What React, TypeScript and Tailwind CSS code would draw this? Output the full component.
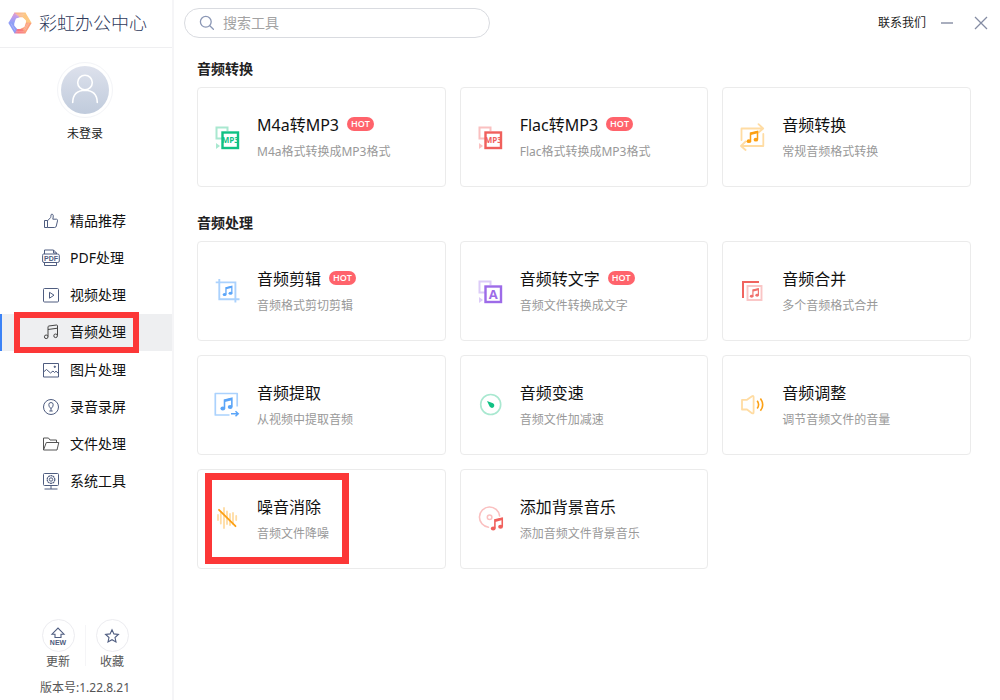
import { useState } from 'react';
import type { ReactNode } from 'react';

type Tool = {
  title: string;
  desc: string;
  icon: ReactNode;
  hot?: boolean;
  marked?: boolean;
};

type MenuItem = {
  id: string;
  label: string;
  icon: ReactNode;
};

// Beamed note, drawn in a 12x13 area and placed with x / y / scale
function Note({ x, y, s = 1, color }: { x: number; y: number; s?: number; color: string }) {
  return (
    <g transform={`translate(${x} ${y}) scale(${s})`} stroke={color} fill="none" strokeWidth="1.5">
      <path d="M4 10.5V2.6L11 0.9V9" />
      <path d="M4 3.4L11 1.7" strokeWidth="2.2" />
      <ellipse cx="2.4" cy="10.7" rx="2.3" ry="1.9" fill={color} stroke="none" />
      <ellipse cx="9.4" cy="9.2" rx="2.3" ry="1.9" fill={color} stroke="none" />
    </g>
  );
}

function ToolSvg({ children }: { children: ReactNode }) {
  return (
    <svg viewBox="0 0 28 28" className="h-7 w-7 shrink-0" fill="none" aria-hidden="true">
      {children}
    </svg>
  );
}

function ConvertIcon({ color, light, text }: { color: string; light: string; text: string }) {
  const letter = text.length === 1;
  return (
    <ToolSvg>
      <path d="M8 15.5H2.5V4.5H13.5V8" stroke={light} strokeWidth="2" />
      <path d="M2 20L6 23L2 26Z" fill={light} />
      <rect x="8.5" y="9.5" width="15.5" height="15.5" stroke={color} strokeWidth="2.4" />
      <text
        x="16.3"
        y={letter ? 22 : 20.2}
        textAnchor="middle"
        fontSize={letter ? 13 : 8}
        fontWeight="700"
        fill={color}
        fontFamily="Open Sans, sans-serif"
      >
        {text}
      </text>
    </ToolSvg>
  );
}

const convertTools: Tool[] = [
  {
    title: 'M4a转MP3',
    desc: 'M4a格式转换成MP3格式',
    hot: true,
    icon: <ConvertIcon color="#10c184" light="#a9e8d0" text="MP3" />,
  },
  {
    title: 'Flac转MP3',
    desc: 'Flac格式转换成MP3格式',
    hot: true,
    icon: <ConvertIcon color="#f0605c" light="#fac0c0" text="MP3" />,
  },
  {
    title: '音频转换',
    desc: '常规音频格式转换',
    icon: (
      <ToolSvg>
        <g stroke="#ffdca3" strokeWidth="1.8" strokeLinejoin="round" strokeLinecap="round">
          <path d="M2.5 17V5.5H24M19.5 1.2L24.2 5.5L19.5 9.5" />
          <path d="M24.3 11V23H2.2M6.6 18.5L2 23L6.6 27" />
        </g>
        <Note x={7.5} y={7.5} color="#fca014" />
      </ToolSvg>
    ),
  },
];

const processTools: Tool[] = [
  {
    title: '音频剪辑',
    desc: '音频格式剪切剪辑',
    hot: true,
    icon: (
      <ToolSvg>
        <path d="M5.3 2V22.2H25.5M1.7 5.4H21.4V25.5" stroke="#abd2fd" strokeWidth="1.9" />
        <Note x={8.6} y={8.5} s={0.84} color="#5ba5f8" />
      </ToolSvg>
    ),
  },
  {
    title: '音频转文字',
    desc: '音频文件转换成文字',
    hot: true,
    icon: <ConvertIcon color="#9d6be8" light="#dccbf8" text="A" />,
  },
  {
    title: '音频合并',
    desc: '多个音频格式合并',
    icon: (
      <ToolSvg>
        <path d="M4 21V5H20" stroke="#f0645f" strokeWidth="2" />
        <rect x="8.5" y="9" width="14" height="14" stroke="#fac5c5" strokeWidth="1.9" />
        <Note x={10.8} y={11} s={0.78} color="#f0706c" />
      </ToolSvg>
    ),
  },
  {
    title: '音频提取',
    desc: '从视频中提取音频',
    icon: (
      <ToolSvg>
        <path d="M15.5 24H1.3V2.5H23.2V15.5" stroke="#abd2fd" strokeWidth="1.7" strokeLinejoin="round" />
        <path d="M17 22.7H24M21.5 20.2L24.2 22.7L21.5 25.2" stroke="#5ba5f8" strokeWidth="1.5" />
        <Note x={6.3} y={6.3} s={1.05} color="#5ba5f8" />
      </ToolSvg>
    ),
  },
  {
    title: '音频变速',
    desc: '音频文件加减速',
    icon: (
      <ToolSvg>
        <circle cx="13.7" cy="13.5" r="10" stroke="#a9e8d0" strokeWidth="1.6" />
        <path d="M10 10L16 12.2A2.5 2.5 0 1 1 12.6 15.6Z" fill="#10c184" />
      </ToolSvg>
    ),
  },
  {
    title: '音频调整',
    desc: '调节音频文件的音量',
    icon: (
      <ToolSvg>
        <path
          d="M3 8.8H8L13 5.2Q14.6 4.4 14.6 6V21.3Q14.6 23 13 22.2L8 18.5H3Z"
          stroke="#ffdca3"
          strokeWidth="1.8"
          strokeLinejoin="round"
        />
        <path d="M18.2 9.8Q21 13.6 18.2 17.5M21.4 7.6Q26 13.6 21.4 19.8" stroke="#fca014" strokeWidth="1.6" />
      </ToolSvg>
    ),
  },
  {
    title: '噪音消除',
    desc: '音频文件降噪',
    marked: true,
    icon: (
      <ToolSvg>
        <path
          d="M4 10V15M6.8 8V18.5M10 3V23M13 6.5V19M16 9V20M19 8V19M22.2 11V15"
          stroke="#ffdca3"
          strokeWidth="1.8"
          strokeLinecap="round"
        />
        <path d="M5 4.8L21.5 21.2" stroke="#fca014" strokeWidth="1.8" strokeLinecap="round" />
      </ToolSvg>
    ),
  },
  {
    title: '添加背景音乐',
    desc: '添加音频文件背景音乐',
    icon: (
      <ToolSvg>
        <path d="M22.6 11A10.1 10.1 0 1 0 11.5 22.2" stroke="#fac0c0" strokeWidth="1.6" strokeLinecap="round" />
        <circle cx="12.6" cy="12.2" r="2.3" stroke="#fac0c0" strokeWidth="1.5" />
        <Note x={13.7} y={12.2} s={1.05} color="#f0605c" />
      </ToolSvg>
    ),
  },
];

const menu: MenuItem[] = [
  {
    id: 'recommend',
    label: '精品推荐',
    icon: (
      <path d="M2.5 8.5H5.5V15.5H2.5ZM5.5 8.8L8.6 5.6Q9 4.6 9 3Q9.3 1.8 10.4 2.2Q11.6 2.8 11.2 5L10.8 7.2H14.6Q15.8 7.4 15.5 8.8L14.3 14Q14 15.5 12.6 15.5H5.5" />
    ),
  },
  {
    id: 'pdf',
    label: 'PDF处理',
    icon: (
      <>
        <path d="M2.5 5V1H11.5L14.5 4V5M11.5 1V4H14.5M2.5 13.5V16.5H14.5V13.5M1.5 5H15.5Q17.3 5 17.3 6.5V12Q17.3 13.5 15.5 13.5H2Q0.6 13.5 0.6 12V6.5Q0.6 5 1.5 5Z" />
        <text
          x="9"
          y="12"
          textAnchor="middle"
          fontSize="7"
          fontWeight="700"
          fill="#4f5d80"
          stroke="none"
          fontFamily="Liberation Sans, sans-serif"
        >
          PDF
        </text>
      </>
    ),
  },
  {
    id: 'video',
    label: '视频处理',
    icon: <path d="M2.5 2.5H15.5Q16.5 2.5 16.5 3.5V15Q16.5 16 15.5 16H2.5Q1.5 16 1.5 15V3.5Q1.5 2.5 2.5 2.5ZM7.5 6.3L12 9.2L7.5 12.2Z" />,
  },
  {
    id: 'audio',
    label: '音频处理',
    icon: (
      <g stroke="#444">
        <path d="M6 13.5V4Q6 3.2 6.8 3L14.5 2Q15.5 2 15.5 3V12.5M6 6.5L15.5 5.2" />
        <circle cx="4.2" cy="13.8" r="1.8" />
        <circle cx="13.6" cy="12.8" r="1.8" />
      </g>
    ),
  },
  {
    id: 'image',
    label: '图片处理',
    icon: (
      <>
        <path d="M1.5 2.5H16.5V16H1.5ZM1.5 11L4.5 8.5L8.5 12L11 10L12.5 11.5L14 10.2L16.5 12.5" />
        <circle cx="12.8" cy="5.8" r="0.7" fill="#4f5d80" />
      </>
    ),
  },
  {
    id: 'record',
    label: '录音录屏',
    icon: (
      <>
        <circle cx="9" cy="9" r="7.5" />
        <path d="M9 4.5Q11.2 4.5 11.2 6.8Q11.2 9 9 10.5Q6.8 9 6.8 6.8Q6.8 4.5 9 4.5ZM9 10V13M7.3 13H10.7" />
      </>
    ),
  },
  {
    id: 'file',
    label: '文件处理',
    icon: <path stroke="#555" d="M1.5 15V3H6.5L8 5H14.5V7.5M1.5 15L4.3 7.5H16.8L15 15Z" />,
  },
  {
    id: 'system',
    label: '系统工具',
    icon: (
      <>
        <path d="M2.5 1.5H15.5Q16.5 1.5 16.5 2.5V12.5Q16.5 13.5 15.5 13.5H2.5Q1.5 13.5 1.5 12.5V2.5Q1.5 1.5 2.5 1.5ZM9 13.5V17M2.5 17H15.5" />
        <circle cx="9" cy="7.5" r="3.8" strokeDasharray="2 0.4" strokeWidth="1.2" />
        <circle cx="9" cy="7.5" r="1.7" />
      </>
    ),
  },
];

function Logo() {
  return (
    <svg viewBox="0 0 24 24" className="h-6 w-6" aria-hidden="true">
      <defs>
        <linearGradient id="logo-left" x1="0" y1="0" x2="0" y2="1">
          <stop offset="0" stopColor="#e79ac9" />
          <stop offset="0.5" stopColor="#b69cf0" />
          <stop offset="1" stopColor="#8aa0f7" />
        </linearGradient>
        <linearGradient id="logo-top" x1="0" y1="0" x2="1" y2="0">
          <stop offset="0" stopColor="#f7a08f" />
          <stop offset="1" stopColor="#fdc97f" />
        </linearGradient>
        <linearGradient id="logo-bottom" x1="0" y1="0" x2="1" y2="0">
          <stop offset="0" stopColor="#c58bdc" />
          <stop offset="0.4" stopColor="#f7747f" />
          <stop offset="1" stopColor="#fb8a78" />
        </linearGradient>
      </defs>
      <path d="M6.6 1.6H17.4L18.6 9L14.6 6.2H9.4L4.4 5.4Z" fill="url(#logo-top)" />
      <path d="M17.4 1.6L23.6 12L17.8 14.8L18 9.6L14.8 6.2Z" fill="#fdc883" />
      <path d="M23.6 12L17.4 22.4L12.4 17.8L16.4 16L18 11.6Z" fill="#fb9f7c" />
      <path d="M17.4 22.4H6.6L5.6 15.4L9 18H14.4Z" fill="url(#logo-bottom)" />
      <path d="M6.6 22.4L0.4 12L6.4 9L6.2 14.4L9 18Z" fill="#8f9df6" />
      <path d="M0.4 12L6.6 1.6L11.6 6.2L8 7.6L6 12.4Z" fill="url(#logo-left)" />
      <path
        d="M7.5 3.2H16.5M8.5 4.8H15.5M21 12L17 19.5M19.4 12.5L15.8 19M8 20.8H16M3 12.5L7 19.5"
        stroke="#fff"
        strokeWidth="0.5"
        opacity="0.5"
      />
    </svg>
  );
}

function ToolCard({ tool }: { tool: Tool }) {
  return (
    <button
      type="button"
      className="relative flex h-[100px] items-center gap-[15px] rounded border border-[#ebebeb] bg-white px-4 text-left hover:shadow-md"
    >
      {tool.icon}
      <span className="flex min-w-0 flex-col gap-1.5">
        <span className="flex items-center gap-2">
          <span className="text-base leading-6 text-[#111]">{tool.title}</span>
          {tool.hot && (
            <span className="mb-0.5 flex h-3.5 items-center rounded-full bg-[#ff636b] px-1 font-['Open_Sans',sans-serif] text-[9px] font-semibold text-white">
              HOT
            </span>
          )}
        </span>
        <span className="text-xs leading-[18px] text-[#999]">{tool.desc}</span>
      </span>
      {tool.marked && (
        <span className="pointer-events-none absolute top-[3px] left-[7px] h-[91px] w-36 border-[7px] border-[#fc3737]" />
      )}
    </button>
  );
}

function ToolSection({ title, tools }: { title: string; tools: Tool[] }) {
  return (
    <section>
      <h2 className="mb-1.5 text-sm leading-6 font-bold text-[#222]">{title}</h2>
      <div className="grid grid-cols-3 gap-3.5">
        {tools.map(tool => (
          <ToolCard key={tool.title} tool={tool} />
        ))}
      </div>
    </section>
  );
}

function App() {
  const [active, setActive] = useState('audio');
  const [query, setQuery] = useState('');

  const filterTools = (tools: Tool[]) => tools.filter(tool => tool.title.includes(query));

  return (
    <div className="flex min-h-screen bg-white font-['Noto_Sans','Noto_Sans_CJK_SC',sans-serif]">
      {/* Sidebar */}
      <aside className="flex w-[174px] shrink-0 flex-col border-r-2 border-[#f5f5f7]">
        <div className="flex h-12 items-center gap-[7px] border-b border-[#efeff1] pb-0.5 pl-2">
          <Logo />
          <h1 className="text-lg font-light text-[#2f3a5c]">彩虹办公中心</h1>
        </div>

        <div className="flex flex-col items-center pt-3.5 pr-0.5">
          <div className="rounded-full border border-[#f3f4f7] p-[3px]">
            <svg viewBox="0 0 48 48" className="h-12 w-12 rounded-full bg-gradient-to-b from-[#dde1ec] to-[#c0cbdc]" fill="none" stroke="#fff" strokeWidth="1.6" strokeLinecap="round" aria-hidden="true">
              <circle cx="24" cy="16.5" r="7.3" />
              <path d="M11.7 36.5Q12 24.5 24 24.3Q36 24.5 36.3 36.5" />
            </svg>
          </div>
          <button type="button" className="mt-1.5 text-xs leading-5 text-[#222]">
            未登录
          </button>
        </div>

        <nav className="mt-[58px] grid h-[298px] auto-rows-fr">
          {menu.map(item => (
            <button
              key={item.id}
              type="button"
              onClick={() => setActive(item.id)}
              className={`relative flex items-center gap-2.5 border-l-2 pl-10 text-sm text-[#111] ${
                active === item.id ? 'border-[#3b82f6] bg-[#eeeff1]' : 'border-transparent'
              }`}
            >
              <svg viewBox="0 0 18 18" className="h-[18px] w-[18px]" fill="none" stroke="#4f5d80" strokeWidth="1" aria-hidden="true">
                {item.icon}
              </svg>
              {item.label}
              {item.id === 'audio' && (
                <span className="pointer-events-none absolute -inset-y-0.5 left-3 w-[125px] border-[6px] border-[#fc3737]" />
              )}
            </button>
          ))}
        </nav>

        {/* Footer */}
        <div className="mt-auto flex flex-col items-center pr-0.5 pb-0.5 text-xs text-[#555]">
          <div className="flex gap-2.5">
            <button type="button" className="flex flex-col items-center">
              <span className="flex h-[33px] w-[33px] items-center justify-center rounded-full border border-[#ececf0]">
                <svg viewBox="0 0 20 20" className="h-5 w-5 shrink-0" fill="none" stroke="#4f5d80" strokeWidth="1.1" aria-hidden="true">
                  <path d="M7 11.5V8.2H4L10 2L16 8.2H13V11.5Z" />
                  <text x="10" y="19" textAnchor="middle" fontSize="7" fontWeight="700" fill="#4f5d80" stroke="none" fontFamily="Liberation Sans, sans-serif">
                    NEW
                  </text>
                </svg>
              </span>
              <span className="leading-5">更新</span>
            </button>
            <span className="my-1.5 w-px bg-[#f5f5f7]" />
            <button type="button" className="flex flex-col items-center">
              <span className="flex h-[33px] w-[33px] items-center justify-center rounded-full border border-[#ececf0]">
                <svg viewBox="0 0 16 16" className="h-4 w-4" fill="none" stroke="#4f5d80" strokeWidth="1.1" aria-hidden="true">
                  <path d="M8 1.8L9.9 5.9L14.4 6.4L11 9.5L12 14L8 11.7L4 14L5 9.5L1.6 6.4L6.1 5.9Z" />
                </svg>
              </span>
              <span className="leading-5">收藏</span>
            </button>
          </div>
          <span className="mt-1.5 leading-5">版本号:1.22.8.21</span>
        </div>
      </aside>

      {/* Main */}
      <main className="min-w-0 flex-1">
        <header className="flex h-12 items-center justify-between pr-3 pb-0.5 pl-2.5">
          <label className="flex h-[30px] w-[306px] items-center gap-2 rounded-full border border-[#d9dbe0] px-3.5">
            <svg viewBox="0 0 16 16" className="h-4 w-4 shrink-0" fill="none" stroke="#8b97b5" strokeWidth="1.3" strokeLinecap="round" aria-hidden="true">
              <circle cx="6.8" cy="6.8" r="5.4" />
              <path d="M10.8 10.8L14.4 14.2" />
            </svg>
            <input
              type="text"
              aria-label="搜索工具"
              placeholder="搜索工具"
              value={query}
              onChange={e => setQuery(e.target.value)}
              className="w-full bg-transparent text-sm text-[#333] outline-none placeholder:text-[#a3a3a3]"
            />
          </label>
          <div className="flex items-center gap-3.5">
            <a href="#contact" className="text-xs text-[#222]">
              联系我们
            </a>
            <button type="button" aria-label="最小化">
              <svg viewBox="0 0 14 14" className="h-3.5 w-3.5" stroke="#848ca3" strokeWidth="1.4">
                <path d="M1 7H13" />
              </svg>
            </button>
            <button type="button" aria-label="关闭" className="ml-1.5">
              <svg viewBox="0 0 14 14" className="h-3.5 w-3.5" stroke="#848ca3" strokeWidth="1.3">
                <path d="M1 1L13 13M13 1L1 13" />
              </svg>
            </button>
          </div>
        </header>

        <div className="flex flex-col gap-6 pt-[9px] pr-[29px] pb-6 pl-[23px]">
          <ToolSection title="音频转换" tools={filterTools(convertTools)} />
          <ToolSection title="音频处理" tools={filterTools(processTools)} />
        </div>
      </main>
    </div>
  );
}

export default App;
